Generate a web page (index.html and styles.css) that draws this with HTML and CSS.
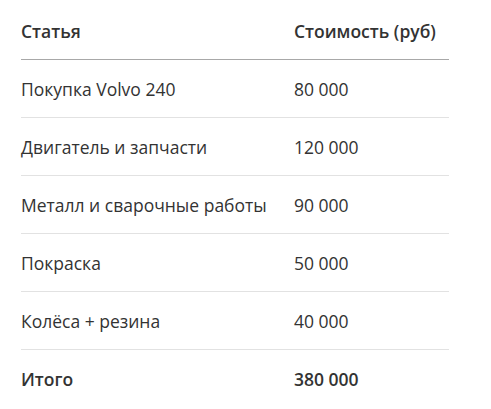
FILE: index.html
```html
<!DOCTYPE html>
<html lang="ru">
<head>
<meta charset="utf-8">
<link rel="stylesheet" href="styles.css">
</head>
<body>
<table class="costs">
  <thead>
    <tr><th class="col-item">Статья</th><th class="col-cost">Стоимость (руб)</th></tr>
  </thead>
  <tbody>
    <tr><td>Покупка Volvo 240</td><td>80 000</td></tr>
    <tr><td>Двигатель и запчасти</td><td>120 000</td></tr>
    <tr><td>Металл и сварочные работы</td><td>90 000</td></tr>
    <tr><td>Покраска</td><td>50 000</td></tr>
    <tr><td>Колёса + резина</td><td>40 000</td></tr>
    <tr class="total"><td>Итого</td><td>380 000</td></tr>
  </tbody>
</table>
</body>
</html>
```
FILE: styles.css
```css
html, body {
  margin: 0;
  padding: 0;
  background: #ffffff;
}
body {
  padding: 8px 0 0 21px;
  font-family: "Open Sans", "Noto Sans", sans-serif;
  font-size: 17.5px;
  color: #333333;
}
.costs {
  border-collapse: collapse;
  width: 428px;
  table-layout: fixed;
}
.col-item { width: 273px; }
.costs th, .costs td {
  text-align: left;
  padding: 0;
  line-height: 25px;
  vertical-align: middle;
}
.costs th {
  font-weight: 600;
  padding: 11px 0 15px;
  border-bottom: 1px solid #a8a8a8;
}
.costs td {
  padding: 17px 0 15px;
  border-bottom: 1px solid #e2e2e2;
}
.costs tr.total td {
  font-weight: 600;
  border-bottom: none;
}
```
